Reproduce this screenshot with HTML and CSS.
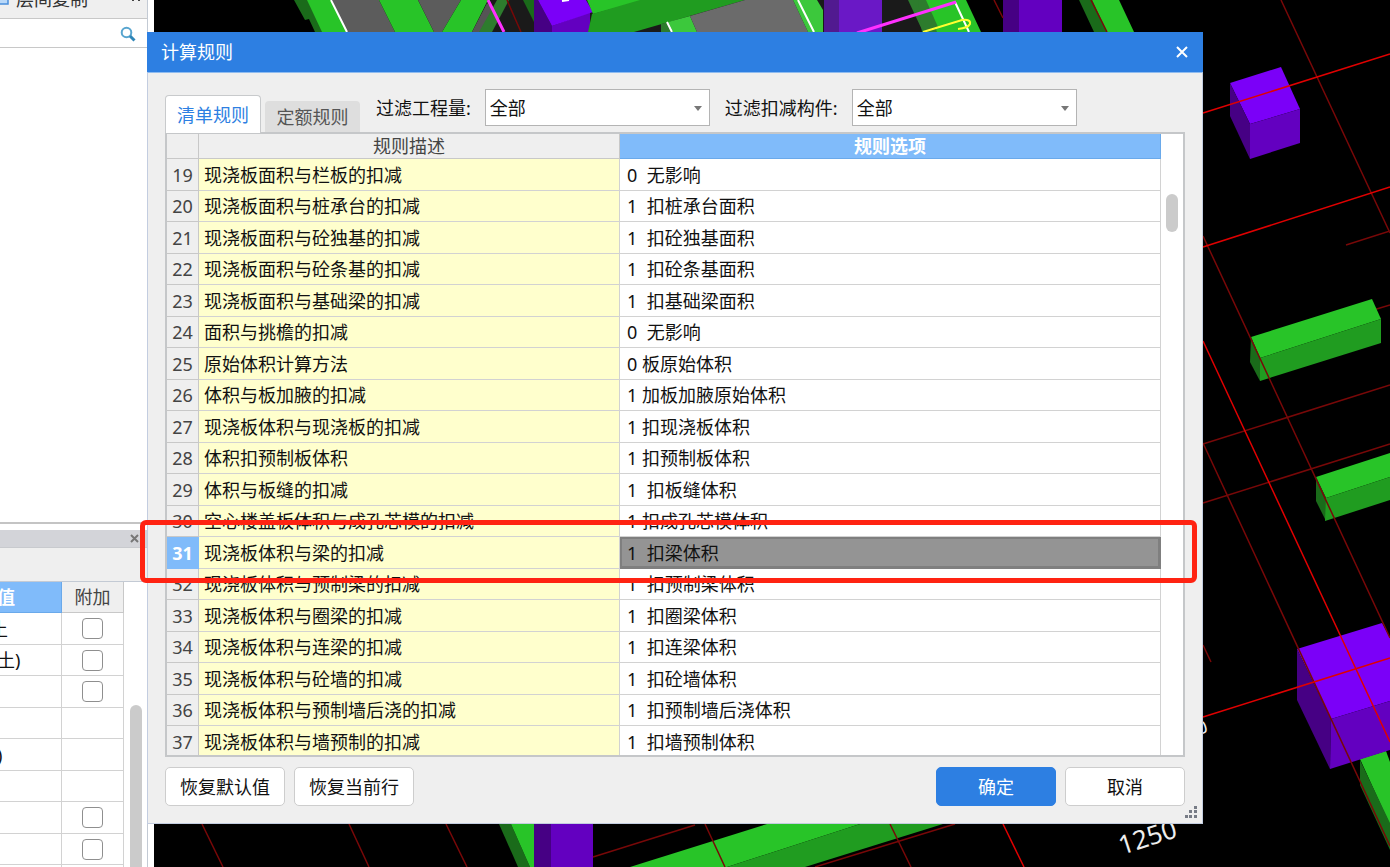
FILE: index.html
```
<!DOCTYPE html>
<html lang="zh-CN">
<head>
    <meta charset="UTF-8">
    <meta name="viewport" content="width=device-width, initial-scale=1.0">
    <title>计算规则</title>
    <link rel="stylesheet" href="styles.css">
</head>
<body>
    <div class="app">
        <aside class="side">
            <div class="side-bar">
                <svg class="copy-icon" width="9" height="20" viewBox="0 0 9 20"><path d="M0 3H8V19H0" fill="#b9d8f8" stroke="#4a8fdc" stroke-width="1.5"/></svg>
                <span class="side-name">层间复制</span>
                <svg class="more-icon" width="8" height="12" viewBox="0 0 8 12"><path d="M1 4v4M7 4v4" stroke="#444" stroke-width="2"/></svg>
            </div>
            <div class="search">
                <svg width="16" height="16" viewBox="0 0 16 16"><circle cx="6.5" cy="6.5" r="4.8" fill="none" stroke="#58a5cf" stroke-width="2"/><path d="M10 10l4.5 4.5" stroke="#2f86b8" stroke-width="3"/></svg>
            </div>
            <div class="tree"></div>
            <div class="dock">
                <button class="dock-close" aria-label="关闭">
                    <svg width="9" height="9" viewBox="0 0 9 9"><path d="M1 1l7 7M8 1l-7 7" stroke="#777" stroke-width="2"/></svg>
                </button>
            </div>
            <div class="tools"></div>
            <div class="props">
                <table class="grid prop-table">
                    <thead>
                        <tr><th class="cur">值</th><th>附加</th></tr>
                    </thead>
                    <tbody>
                        <tr><td class="cut">土</td><td><input type="checkbox" aria-label="附加1"></td></tr>
                        <tr><td>土)</td><td><input type="checkbox" aria-label="附加2"></td></tr>
                        <tr><td></td><td><input type="checkbox" aria-label="附加3"></td></tr>
                        <tr><td></td><td></td></tr>
                        <tr><td>)</td><td></td></tr>
                        <tr><td></td><td></td></tr>
                        <tr><td></td><td><input type="checkbox" aria-label="附加4"></td></tr>
                        <tr><td></td><td><input type="checkbox" aria-label="附加5"></td></tr>
                        <tr><td></td><td></td></tr>
                    </tbody>
                </table>
                <div class="side-scroll"><div class="thumb"></div></div>
            </div>
        </aside>

        <main class="view">
            <svg class="scene" viewBox="154 0 1236 867" preserveAspectRatio="xMinYMin slice">
                <!-- 上方 -->
                <path fill="#1a1a1a" d="M488 0H925V32H478z"/>
                <path fill="#1a6b1a" d="M294 0H308L323 32H315L309 19 305 20z"/>
                <path fill="#28c428" d="M307 0H331L347 32H322z"/>
                <path fill="#5c5c5c" d="M332 0H379L395 32H347z"/>
                <path fill="#28c428" d="M379 0H418L434 32H395z"/>
                <path fill="#5c5c5c" d="M418 0H461L442 32H434z"/>
                <path fill="#28c428" d="M461 0H488L472 32H442z"/>
                <path fill="#555" d="M487 3L472 32H483L494 10z"/>
                <path fill="#2d7c2d" d="M497 0H509L492 32H479z"/>
                <path fill="#1a6b1a" d="M523 0H534V22z"/>
                <path fill="#460084" d="M534 0H538L552 26V32H534z"/>
                <path fill="#6300c0" d="M552 26L590 12V32H552z"/>
                <path fill="#7b00f8" d="M538 0H586L593 12 552 26z"/>
                <path fill="#28c428" d="M587 0H645L593 14z"/>
                <path fill="#209c20" d="M592 14L640 0H745L634 32H588z"/>
                <path fill="#2d7c2d" d="M661 24L668 22 673 32H661z"/>
                <path fill="#3cc83c" d="M668 22L690 16 697 32H673z"/>
                <path fill="#6b6b6b" d="M690 16L745 0H793L808 32H697z"/>
                <path fill="#3cc83c" d="M793 0H817L823 10V32H808z"/>
                <path fill="#511a90" d="M824 0H839V32H824z"/>
                <path fill="#6a18c6" d="M839 0H882V32H839z"/>
                <path fill="#2d7c2d" d="M908 0H932L938 32H923z"/>
                <path fill="#28c428" d="M925 0H966L981 32H937z"/>
                <path fill="#2d7c2d" d="M918 0H926L938 27 922 32z"/>
                <path fill="#460084" d="M1003 0H1019V32H1003z"/>
                <path fill="#6300c0" d="M1019 0H1062V32H1019z"/>
                <path fill="#1a6b1a" d="M1079 0H1092L1108 32H1094z"/>
                <path fill="#28c428" d="M1092 0H1119L1134 32H1107z"/>
                <path class="axis dim" d="M507 0L521 32M994 0L1003 18M1091 0L1107 32"/>
                <path class="edge white" d="M331 0L347 32M562 1L569 0M667 22L672 32M798 0L814 32M955 2L969 32"/>
                <path class="edge pink" d="M488 0L504 32M857 33L956 2"/>
                <path class="edge yellow" d="M923 32L962 20Q971 19 970 24 968 28 958 29"/>

                <!-- 右侧构件 -->
                <path class="axis dim" d="M1370 311L1390 305"/>
                <path fill="#7b00f8" d="M1230 83L1281 67 1300 109 1250 124z"/>
                <path fill="#460084" d="M1230 83L1250 124V159L1230 116z"/>
                <path fill="#6300c0" d="M1250 124L1300 109V143L1250 159z"/>
                <path fill="#28c428" d="M1251 337L1372 299 1381 319 1260 358z"/>
                <path fill="#1a6b1a" d="M1251 337L1260 358V381L1250 362z"/>
                <path fill="#209c20" d="M1260 358L1381 319V343L1260 381z"/>
                <path fill="#28c428" d="M1316 477L1390 453V477L1326 498z"/>
                <path fill="#1a6b1a" d="M1316 477L1326 498V521L1316 501z"/>
                <path fill="#209c20" d="M1326 498L1390 477V500L1325 521z"/>
                <path fill="#28c428" d="M1360 759L1386 751 1390 762V825z"/>
                <path fill="#1a6b1a" d="M1360 760L1390 823V850L1360 785z"/>
                <path fill="#7b00f8" d="M1297 649L1382 623 1390 638V701L1331 719z"/>
                <path fill="#460084" d="M1297 649L1331 719 1330 769 1297 700z"/>
                <path fill="#6300c0" d="M1331 719L1390 701V750L1330 769z"/>

                <!-- 下方 -->
                <path fill="#1a6b1a" d="M499 824H511L530 867H518z"/>
                <path fill="#28c428" d="M511 824H534V867H530z"/>
                <path fill="#460084" d="M534 824H551V867H534z"/>
                <path fill="#6300c0" d="M551 824H593V867H551z"/>
                <path fill="#28c428" d="M767 824H860L727 867H630z"/>
                <path fill="#209c20" d="M860 824H943L805 867H727z"/>

                <!-- 轴线 -->
                <path class="axis dim" d="M1281 0L1390 233M1203 236L1390 638M1346 245L1390 231M1203 444L1390 385M1203 503L1390 444M1203 443L1390 846M1203 645L1211 662"/>
                <path class="axis dim" d="M202 824L223 867M349 824L369 867M446 824L467 867M705 824L725 867M890 824L911 867M955 824L815 867M593 857L695 825"/>
                <path class="axis" d="M1203 113L1390 54M1203 247L1390 187M1203 341L1390 742M1203 717L1390 658M1003 824L1024 867"/>
                <text class="dim-text" transform="translate(1122 855) rotate(-18)">1250</text>
                <text class="dim-text small" transform="translate(1199 735) rotate(-18)">0</text>
            </svg>
        </main>

        <section class="dialog" role="dialog" aria-labelledby="dialog-title">
            <header class="dialog-head">
                <h1 id="dialog-title">计算规则</h1>
                <button class="close" aria-label="关闭">
                    <svg width="14" height="14" viewBox="0 0 14 14"><path d="M2 2l10 10M12 2L2 12" stroke="#fff" stroke-width="2"/></svg>
                </button>
            </header>
            <div class="dialog-body">
                <div class="top">
                    <div class="tabs">
                        <button class="tab active">清单规则</button>
                        <button class="tab">定额规则</button>
                    </div>
                    <div class="filter">
                        <label for="quantity">过滤工程量:</label>
                        <div class="select"><select id="quantity"><option>全部</option></select></div>
                    </div>
                    <div class="filter">
                        <label for="part">过滤扣减构件:</label>
                        <div class="select"><select id="part"><option>全部</option></select></div>
                    </div>
                </div>
                <div class="panel">
                    <table class="grid rule-table">
                        <thead>
                            <tr><th class="no"></th><th class="desc">规则描述</th><th class="cur">规则选项</th></tr>
                        </thead>
                        <tbody class="rules"></tbody>
                    </table>
                    <div class="scroll"><div class="thumb"></div></div>
                </div>
                <footer class="actions">
                    <button class="btn">恢复默认值</button>
                    <button class="btn">恢复当前行</button>
                    <button class="btn primary">确定</button>
                    <button class="btn">取消</button>
                </footer>
            </div>
            <svg class="grip" width="12" height="12" viewBox="0 0 12 12"><path fill="#777c86" d="M9 0h3v3H9zM4 4h3v3H4zM9 4h3v3H9zM0 9h3v3H0zM4 9h3v3H4zM9 9h3v3H9z"/></svg>
        </section>

        <div class="mark"></div>
    </div>
    <script>
        const START = 19;
        const current = 31;

        const arr = [
            ['现浇板面积与栏板的扣减', '0  无影响'],
            ['现浇板面积与桩承台的扣减', '1  扣桩承台面积'],
            ['现浇板面积与砼独基的扣减', '1  扣砼独基面积'],
            ['现浇板面积与砼条基的扣减', '1  扣砼条基面积'],
            ['现浇板面积与基础梁的扣减', '1  扣基础梁面积'],
            ['面积与挑檐的扣减', '0  无影响'],
            ['原始体积计算方法', '0 板原始体积'],
            ['体积与板加腋的扣减', '1 加板加腋原始体积'],
            ['现浇板体积与现浇板的扣减', '1 扣现浇板体积'],
            ['体积扣预制板体积', '1 扣预制板体积'],
            ['体积与板缝的扣减', '1  扣板缝体积'],
            ['空心楼盖板体积与成孔芯模的扣减', '1 扣成孔芯模体积'],
            ['现浇板体积与梁的扣减', '1  扣梁体积'],
            ['现浇板体积与预制梁的扣减', '1  扣预制梁体积'],
            ['现浇板体积与圈梁的扣减', '1  扣圈梁体积'],
            ['现浇板体积与连梁的扣减', '1  扣连梁体积'],
            ['现浇板体积与砼墙的扣减', '1  扣砼墙体积'],
            ['现浇板体积与预制墙后浇的扣减', '1  扣预制墙后浇体积'],
            ['现浇板体积与墙预制的扣减', '1  扣墙预制体积']
        ];

        const tbody = document.querySelector('.rules');

        tbody.innerHTML = arr.map(function(ele, index){
            const id = START + index;
            return `
            <tr class="${id === current ? 'selected' : ''}">
                <td class="no">${id}</td>
                <td class="desc">${ele[0]}</td>
                <td class="option">${ele[1]}</td>
            </tr>`;
        }).join('');
    </script>
</body>
</html>
```
FILE: styles.css
```
*{
    box-sizing: border-box;
}
body{
    margin: 0;
    font: 18px/24px "Noto Sans", "Noto Sans CJK SC", sans-serif;
    color: #111;
}
button,select{
    font: inherit;
    color: inherit;
}
button{
    padding: 0;
    border: 0;
    background: none;
    white-space: nowrap;
}
svg{
    display: block;
}
.app{
    position: relative;
    display: flex;
    height: 100vh;
    overflow: hidden;
}

/* 表格公共样式 */
.grid{
    border-collapse: separate;
    border-spacing: 0;
    table-layout: fixed;
}
.grid th,.grid td{
    height: 31px;
    padding: 0 5px;
    border-right: 1px solid #d2d2d2;
    border-bottom: 1px solid #d2d2d2;
    overflow: hidden;
    white-space: pre;
}
.grid tbody tr:nth-child(odd) td{
    height: 32px;
}
.grid th{
    padding: 0;
    font-weight: 400;
    color: #444;
    background: #efefef;
    border-color: #c8c8c8;
}
.grid .cur{
    font-weight: 700;
    color: #fff;
    background: #80bbfa;
    border-color: #6aa9ea;
}
.thumb{
    width: 12px;
    background: #cbcbcb;
    border-radius: 6px;
}

/* 左侧面板 */
.side{
    display: flex;
    flex-direction: column;
    flex: none;
    width: 148px;
    border-right: 1px solid #c3cad4;
    background: #fff;
}
.side-bar{
    display: flex;
    align-items: flex-end;
    height: 19px;
    padding: 0 7px 9px 0;
    background: #efefef;
    border-bottom: 1px solid #c8c8c8;
    overflow: hidden;
}
.side-bar svg{
    flex: none;
    margin-bottom: 4px;
}
.side-name{
    flex: 1;
    padding-left: 7px;
    line-height: 20px;
    color: #333;
}
.search{
    display: flex;
    align-items: center;
    justify-content: flex-end;
    height: 29px;
    padding: 1px 11px 0 0;
    border-bottom: 1px solid #c8c8c8;
}
.tree{
    flex: 1;
    border-bottom: 2px solid #c4c4c4;
}
.dock{
    display: flex;
    align-items: center;
    justify-content: flex-end;
    height: 18px;
    margin-top: 6px;
    padding-right: 8px;
    background: #d3d4d9;
    border-bottom: 1px solid #c8cace;
}
.tools{
    height: 34px;
    background: #efefef;
    border-bottom: 1px solid #c3cad4;
}
.props{
    display: flex;
    height: 285px;
    overflow: hidden;
}
.prop-table{
    width: 124px;
    height: 0;
}
.prop-table th{
    height: 31px;
}
.prop-table th:first-child,.prop-table td:first-child{
    padding: 0;
    text-align: left;
    text-indent: -3px;
}
.prop-table td.cut:first-child{
    text-indent: -10px;
}
.prop-table td{
    text-align: center;
}
.prop-table input{
    appearance: none;
    display: block;
    width: 21px;
    height: 21px;
    margin: 0 auto;
    border: 1px solid #8f8f8f;
    border-radius: 4px;
    background: #fff;
}
.side-scroll{
    padding: 123px 0 0 6px;
}
.side-scroll .thumb{
    height: 200px;
}

/* 三维视图 */
.view{
    flex: 1;
    margin-left: 6px;
    min-width: 0;
    background: #000;
}
.scene{
    width: 100%;
    height: 100%;
}
.axis{
    fill: none;
    stroke: #e00000;
    stroke-width: 1.5;
}
.axis.dim{
    stroke: #780808;
}
.edge{
    fill: none;
    stroke-width: 2;
}
.white{
    stroke: #fff;
}
.pink{
    stroke: #ff30ff;
    stroke-width: 3;
}
.yellow{
    stroke: #ffff30;
}
.dim-text{
    fill: #eee;
    font-size: 26px;
}
.dim-text.small{
    font-size: 18px;
}

/* 计算规则窗口 */
.dialog{
    position: absolute;
    top: 32px;
    left: 147px;
    display: flex;
    flex-direction: column;
    width: 1056px;
    height: 792px;
    background: #efefef;
}
.dialog-head{
    display: flex;
    align-items: center;
    justify-content: space-between;
    height: 40px;
    padding: 0 14px;
    background: #2d7fe2;
    color: #fff;
}
.dialog-head h1{
    margin: 0;
    font-size: 18px;
    font-weight: 400;
}
.dialog-body{
    display: flex;
    flex-direction: column;
    flex: 1;
    min-height: 0;
    padding: 16px 17px 17px;
    border: 1px solid #c3cde0;
    border-top-color: #8fbcf0;
}
.top{
    display: flex;
    height: 43px;
}
.tabs{
    display: flex;
    align-items: flex-end;
    gap: 4px;
    padding-right: 16px;
}
.tab{
    width: 95px;
    height: 31px;
    background: #dedede;
    color: #555;
    border-radius: 4px 4px 0 0;
}
.tab.active{
    position: relative;
    width: 96px;
    height: 38px;
    margin-bottom: -1px;
    background: #fff;
    border: 1px solid #c8cacc;
    border-bottom: 0;
    color: #2d7fe2;
}
.filter{
    display: flex;
    align-items: center;
    gap: 14px;
    height: 37px;
    margin-right: 15px;
}
.select{
    position: relative;
    width: 225px;
}
.select::after{
    content: "";
    position: absolute;
    top: 17px;
    right: 8px;
    border: 4px solid transparent;
    border-top: 5px solid #777;
    border-bottom: 0;
}
.select select{
    appearance: none;
    display: block;
    width: 100%;
    height: 37px;
    padding: 0 4px;
    border: 1px solid #b4b4b4;
    border-radius: 0;
    background: #fff;
}
.panel{
    display: flex;
    flex: 1;
    min-height: 0;
    overflow: hidden;
    background: #fff;
    border: 2px solid #c5c7c9;
}
.rule-table{
    flex: 1;
    height: 0;
}
.rule-table th{
    height: 25px;
    line-height: 22px;
}
.rule-table .no{
    width: 32px;
    padding: 0;
    text-align: center;
    color: #444;
    background: #efefef;
    border-color: #c8c8c8;
}
.rule-table .desc{
    width: 421px;
}
.rule-table td.desc{
    background: #ffffcd;
}
.rule-table .option{
    padding-left: 7px;
}
.rule-table .selected .no{
    font-weight: 700;
    color: #fff;
    background: #80bbfa;
    border-color: #80bbfa;
}
.rule-table .selected .option{
    background: #949494;
    box-shadow: inset 0 0 0 2px #7f7f7f;
    border-color: #7f7f7f;
}
.scroll{
    width: 22px;
    padding: 60px 0 0 5px;
}
.scroll .thumb{
    height: 38px;
}
.actions{
    display: flex;
    gap: 9px;
    padding-top: 10px;
}
.btn{
    width: 120px;
    height: 39px;
    background: #fff;
    border: 1px solid #cdcdcd;
    border-radius: 5px;
}
.btn.primary{
    margin-left: auto;
    background: #2d7fe2;
    border-color: #2d7fe2;
    color: #fff;
}
.grip{
    position: absolute;
    right: 6px;
    bottom: 6px;
}

/* 红框标注 */
.mark{
    position: absolute;
    top: 520px;
    left: 140px;
    width: 1057px;
    height: 63px;
    border: 5px solid #ff2312;
    border-radius: 6px;
}
```
